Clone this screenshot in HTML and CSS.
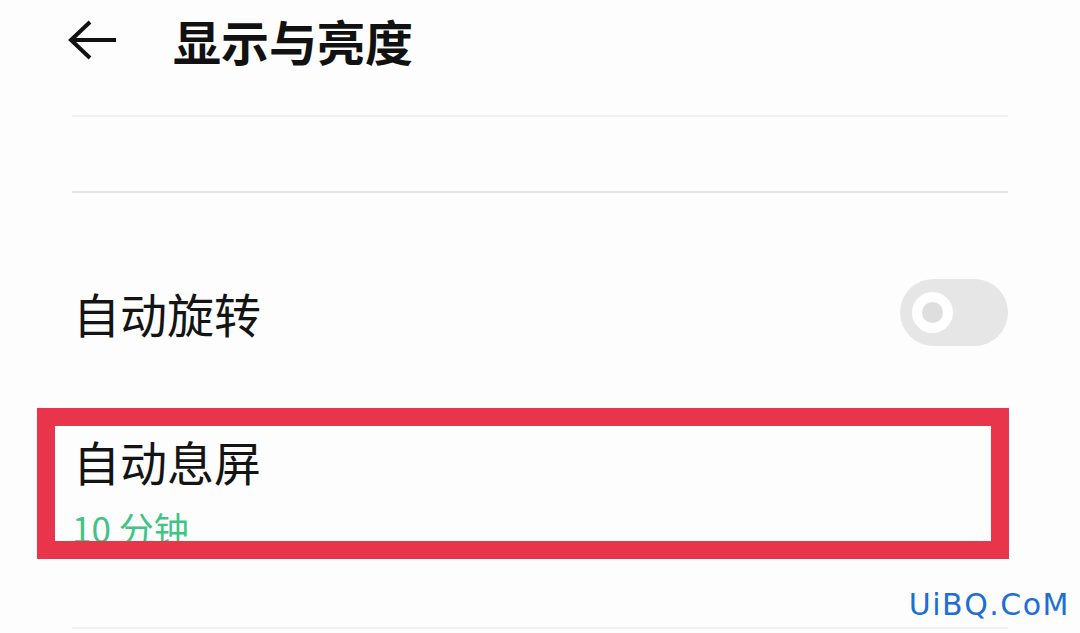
FILE: index.html
```html
<!DOCTYPE html>
<html lang="zh-CN">
<head>
    <meta charset="UTF-8">
    <title>显示与亮度</title>
    <link rel="stylesheet" href="styles.css">
</head>
<body>
    <div class="page">
        <div class="header">
            <svg class="back" width="50" height="40" viewBox="0 0 50 40">
                <path d="M22 2 L3 20 L22 38 M3 20 H48" fill="none" stroke="#111" stroke-width="4" stroke-linecap="butt" stroke-linejoin="miter"/>
            </svg>
            <h1>显示与亮度</h1>
        </div>

        <div class="list">
            <div class="divider light"></div>
            <div class="blank"></div>
            <div class="divider"></div>

            <div class="row toggle-row">
                <span class="row-title">自动旋转</span>
                <div class="switch"><div class="knob"></div></div>
            </div>

            <div class="row sub-row">
                <span class="row-title">自动息屏</span>
                <span class="row-sub">10 分钟</span>
            </div>

            <div class="divider light"></div>
        </div>

        <!-- 标注框 -->
        <div class="mark"></div>
        <div class="watermark">UiBQ.CoM</div>
    </div>
</body>
</html>
```

FILE: styles.css
```css
body { margin: 0; background-color: #fdfdfd; font-family: "Noto Sans CJK SC", "Noto Sans", sans-serif; color: #141414; }
.page { position: relative; width: 1080px; height: 633px; overflow: hidden; }

.header { height: 84px; display: flex; align-items: center; padding-left: 68px; }
.back { display: block; margin-top: -4px; }
.header h1 { margin: -4px 0 0 55px; font-size: 48px; font-weight: 700; line-height: 1; color: #111; }

.list { margin: 31px 72px 0; }
.divider { height: 2px; background-color: #e2e2e2; }
.divider.light { background-color: #f1f1f1; }
.blank { height: 74px; }

.row-title { font-size: 47px; line-height: 46px; }

.toggle-row {
    display: flex; align-items: center; justify-content: space-between;
    padding: 86px 0 86px 1px;
}
.switch {
    width: 108px; height: 67px;
    border-radius: 34px;
    background-color: #e6e6e6;
    display: flex; align-items: center;
    padding-left: 12px;
    box-sizing: border-box;
}
.knob {
    width: 41px; height: 41px;
    border-radius: 50%;
    border: 10px solid #fff;
    background-color: #dedede;
    box-sizing: border-box;
}

.sub-row { display: flex; flex-direction: column; padding: 6px 0 82px 1px; }
.sub-row .row-sub { margin-top: 27px; margin-left: -1px; font-size: 35px; line-height: 34px; color: #3fc484; }

.mark {
    position: absolute; left: 37px; top: 408px;
    width: 972px; height: 151px;
    border: 18px solid #e8354b;
    box-sizing: border-box;
}
.watermark {
    position: absolute; right: 10px; top: 587px;
    font-family: "DejaVu Sans", sans-serif;
    font-size: 30px; letter-spacing: 1.5px;
    color: #1f6ed3;
}
```
